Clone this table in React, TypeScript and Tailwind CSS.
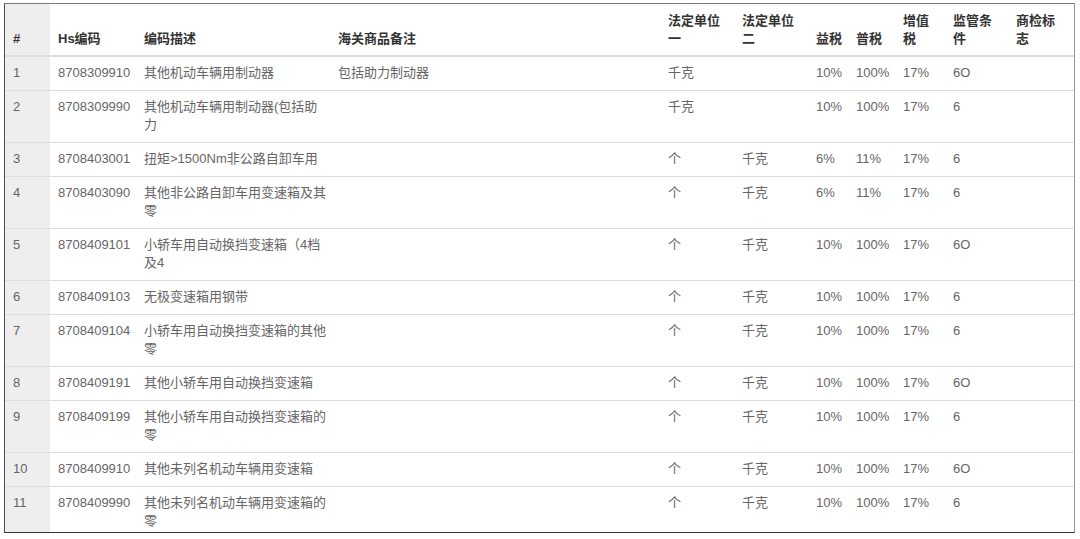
const rows: { hs: string; desc: string[]; note: string; u1: string; u2: string; yi: string; pu: string; vat: string; cond: string }[] = [
  { hs: '8708309910', desc: ['其他机动车辆用制动器'], note: '包括助力制动器', u1: '千克', u2: '', yi: '10%', pu: '100%', vat: '17%', cond: '6O' },
  { hs: '8708309990', desc: ['其他机动车辆用制动器(包括助', '力'], note: '', u1: '千克', u2: '', yi: '10%', pu: '100%', vat: '17%', cond: '6' },
  { hs: '8708403001', desc: ['扭矩>1500Nm非公路自卸车用'], note: '', u1: '个', u2: '千克', yi: '6%', pu: '11%', vat: '17%', cond: '6' },
  { hs: '8708403090', desc: ['其他非公路自卸车用变速箱及其', '零'], note: '', u1: '个', u2: '千克', yi: '6%', pu: '11%', vat: '17%', cond: '6' },
  { hs: '8708409101', desc: ['小轿车用自动换挡变速箱（4档', '及4'], note: '', u1: '个', u2: '千克', yi: '10%', pu: '100%', vat: '17%', cond: '6O' },
  { hs: '8708409103', desc: ['无极变速箱用钢带'], note: '', u1: '个', u2: '千克', yi: '10%', pu: '100%', vat: '17%', cond: '6' },
  { hs: '8708409104', desc: ['小轿车用自动换挡变速箱的其他', '零'], note: '', u1: '个', u2: '千克', yi: '10%', pu: '100%', vat: '17%', cond: '6' },
  { hs: '8708409191', desc: ['其他小轿车用自动换挡变速箱'], note: '', u1: '个', u2: '千克', yi: '10%', pu: '100%', vat: '17%', cond: '6O' },
  { hs: '8708409199', desc: ['其他小轿车用自动换挡变速箱的', '零'], note: '', u1: '个', u2: '千克', yi: '10%', pu: '100%', vat: '17%', cond: '6' },
  { hs: '8708409910', desc: ['其他未列名机动车辆用变速箱'], note: '', u1: '个', u2: '千克', yi: '10%', pu: '100%', vat: '17%', cond: '6O' },
  { hs: '8708409990', desc: ['其他未列名机动车辆用变速箱的', '零'], note: '', u1: '个', u2: '千克', yi: '10%', pu: '100%', vat: '17%', cond: '6' },
];

const headers: string[][] = [
  ['#'],
  ['Hs编码'],
  ['编码描述'],
  ['海关商品备注'],
  ['法定单位', '一'],
  ['法定单位', '二'],
  ['益税'],
  ['普税'],
  ['增值', '税'],
  ['监管条', '件'],
  ['商检标', '志'],
];

export default function App() {
  return (
    <div className="w-[1080px] h-[539px] bg-white overflow-hidden pl-[4px] pt-[3px] font-['Liberation_Sans','Noto_Sans_CJK_SC',sans-serif] text-[13px]">
      <div className="w-[1071px] h-[530px] overflow-hidden border border-t-[#7a7a7a] border-l-[#4a4a4a] border-r-[#9a9a9a] border-b-[#333]">
        <table className="table-fixed border-collapse w-[1069px]">
          <colgroup>
            <col className="w-[45px]" />
            <col className="w-[86px]" />
            <col className="w-[194px]" />
            <col className="w-[330px]" />
            <col className="w-[74px]" />
            <col className="w-[74px]" />
            <col className="w-[40px]" />
            <col className="w-[47px]" />
            <col className="w-[50px]" />
            <col className="w-[63px]" />
            <col className="w-[66px]" />
          </colgroup>
          <thead>
            <tr className="h-[52px] border-b-2 border-[#dddddd]">
              {headers.map((h, i) => (
                <th
                  key={i}
                  className={`align-bottom text-left font-bold text-[#333] leading-[18px] pl-[8px] pb-[7px] whitespace-nowrap ${i === 0 ? 'bg-[#eeeeee]' : ''}`}
                >
                  {h.map((l, j) => (
                    <div key={j}>{l}</div>
                  ))}
                </th>
              ))}
            </tr>
          </thead>
          <tbody className="text-[#666]">
            {rows.map((r, i) => {
              const cells = [String(i + 1), r.hs, r.desc, r.note, r.u1, r.u2, r.yi, r.pu, r.vat, r.cond, ''];
              return (
                <tr key={i} className="border-b border-[#dddddd]">
                  {cells.map((c, j) => (
                    <td
                      key={j}
                      className={`align-top leading-[18px] pl-[8px] pt-[7px] pb-[8px] whitespace-nowrap ${j === 0 ? 'bg-[#eeeeee]' : ''}`}
                    >
                      {Array.isArray(c) ? c.map((l, k) => <div key={k}>{l}</div>) : c || '\u00a0'}
                    </td>
                  ))}
                </tr>
              );
            })}
          </tbody>
        </table>
      </div>
    </div>
  );
}
